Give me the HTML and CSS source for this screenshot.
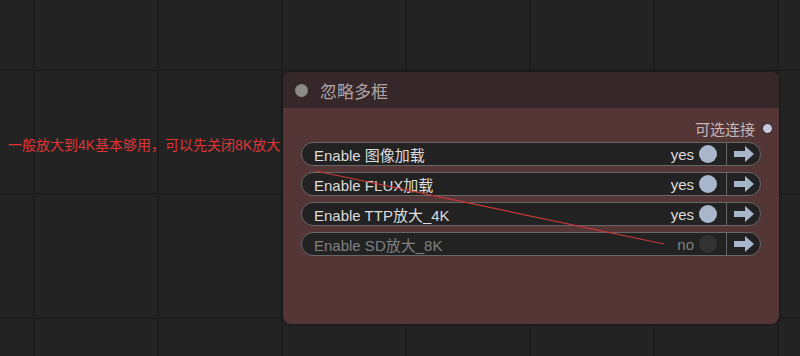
FILE: index.html
```html
<!DOCTYPE html>
<html lang="zh">
<head>
  <meta charset="UTF-8" />
  <title>忽略多框</title>
  <link rel="stylesheet" href="styles.css">
</head>
<body>

<div class="canvas">
  <div class="note">一般放大到4K基本够用，可以先关闭8K放大</div>

  <div class="node">
    <div class="node-title">
      <span class="title-dot"></span>
      <span class="title-text">忽略多框</span>
    </div>
    <div class="node-body">
      <div class="output">
        <span>可选连接</span>
        <span class="slot"></span>
      </div>

      <div class="widget">
        <span class="label">Enable 图像加载</span>
        <span class="value">yes</span>
        <span class="toggle"></span>
        <span class="go">
          <svg width="20" height="16" viewBox="0 0 20 16"><path d="M0 5h11V0l9 8-9 8v-5H0z"/></svg>
        </span>
      </div>
      <div class="widget">
        <span class="label">Enable FLUX加载</span>
        <span class="value">yes</span>
        <span class="toggle"></span>
        <span class="go">
          <svg width="20" height="16" viewBox="0 0 20 16"><path d="M0 5h11V0l9 8-9 8v-5H0z"/></svg>
        </span>
      </div>
      <div class="widget">
        <span class="label">Enable TTP放大_4K</span>
        <span class="value">yes</span>
        <span class="toggle"></span>
        <span class="go">
          <svg width="20" height="16" viewBox="0 0 20 16"><path d="M0 5h11V0l9 8-9 8v-5H0z"/></svg>
        </span>
      </div>
      <div class="widget off">
        <span class="label">Enable SD放大_8K</span>
        <span class="value">no</span>
        <span class="toggle"></span>
        <span class="go">
          <svg width="20" height="16" viewBox="0 0 20 16"><path d="M0 5h11V0l9 8-9 8v-5H0z"/></svg>
        </span>
      </div>
    </div>
  </div>

  <!-- link wire drawn over the node -->
  <svg class="wires" width="800" height="356">
    <line x1="316" y1="171" x2="664" y2="244" />
  </svg>
</div>

</body>
</html>
```

FILE: styles.css
```css
* {
  margin: 0;
  padding: 0;
  box-sizing: border-box;
}
body, html {
  height: 100%;
  overflow: hidden;
  font-family: "Liberation Sans", "Noto Sans CJK SC", sans-serif;
}

.canvas {
  position: relative;
  width: 800px;
  height: 356px;
  background-color: #232324;
  background-image:
    linear-gradient(to right, #1c1c1d 2px, transparent 2px),
    linear-gradient(to bottom, #1c1c1d 2px, transparent 2px);
  background-size: 124px 124px;
  background-position: 33px 69px;
}

.note {
  position: absolute;
  left: 8px;
  top: 134px;
  font-size: 14px;
  color: #e03535;
  white-space: nowrap;
}

.node {
  position: absolute;
  left: 283px;
  top: 72px;
  width: 496px;
  height: 252px;
  border-radius: 8px;
  background: #553636;
  box-shadow: 0 0 3px rgba(0, 0, 0, 0.5);
}

.node-title {
  height: 36px;
  display: flex;
  align-items: center;
  gap: 12px;
  padding-left: 12px;
  background: #35272a;
  border-radius: 8px 8px 0 0;
}
.title-dot {
  width: 13px;
  height: 13px;
  border-radius: 50%;
  background: #8a8a8a;
}
.title-text {
  font-size: 17px;
  color: #b0a4a4;
}

.node-body {
  padding: 7px 18px 0 18px;
  display: flex;
  flex-direction: column;
  gap: 6px;
}

.output {
  height: 26px;
  margin-right: -12px;
  margin-bottom: -5px;
  display: flex;
  align-items: center;
  justify-content: flex-end;
  gap: 7px;
  font-size: 15px;
  color: #c4b8b8;
}
.slot {
  width: 11px;
  height: 11px;
  border-radius: 50%;
  background: #c8c8dc;
  border: 1px solid #222;
}

.widget {
  height: 24px;
  display: flex;
  align-items: center;
  border: 1px solid #686868;
  border-radius: 12px;
  background: #222;
  font-size: 15px;
  color: #dddddd;
}
.widget .label {
  flex: 1;
  padding-left: 12px;
  white-space: nowrap;
}
.widget .value {
  margin-right: 5px;
}
.toggle {
  width: 18px;
  height: 18px;
  border-radius: 50%;
  background: #a8b6cc;
  margin-right: 9px;
}
.go {
  width: 34px;
  height: 100%;
  border-left: 1px solid #686868;
  display: flex;
  align-items: center;
  justify-content: center;
}
.go svg {
  fill: #a8b6cc;
}

.widget.off .label,
.widget.off .value {
  color: #808080;
}
.widget.off .toggle {
  background: #333;
}

.wires {
  position: absolute;
  left: 0;
  top: 0;
  pointer-events: none;
}
.wires line {
  stroke: #c83838;
  stroke-width: 1.2;
}
```
